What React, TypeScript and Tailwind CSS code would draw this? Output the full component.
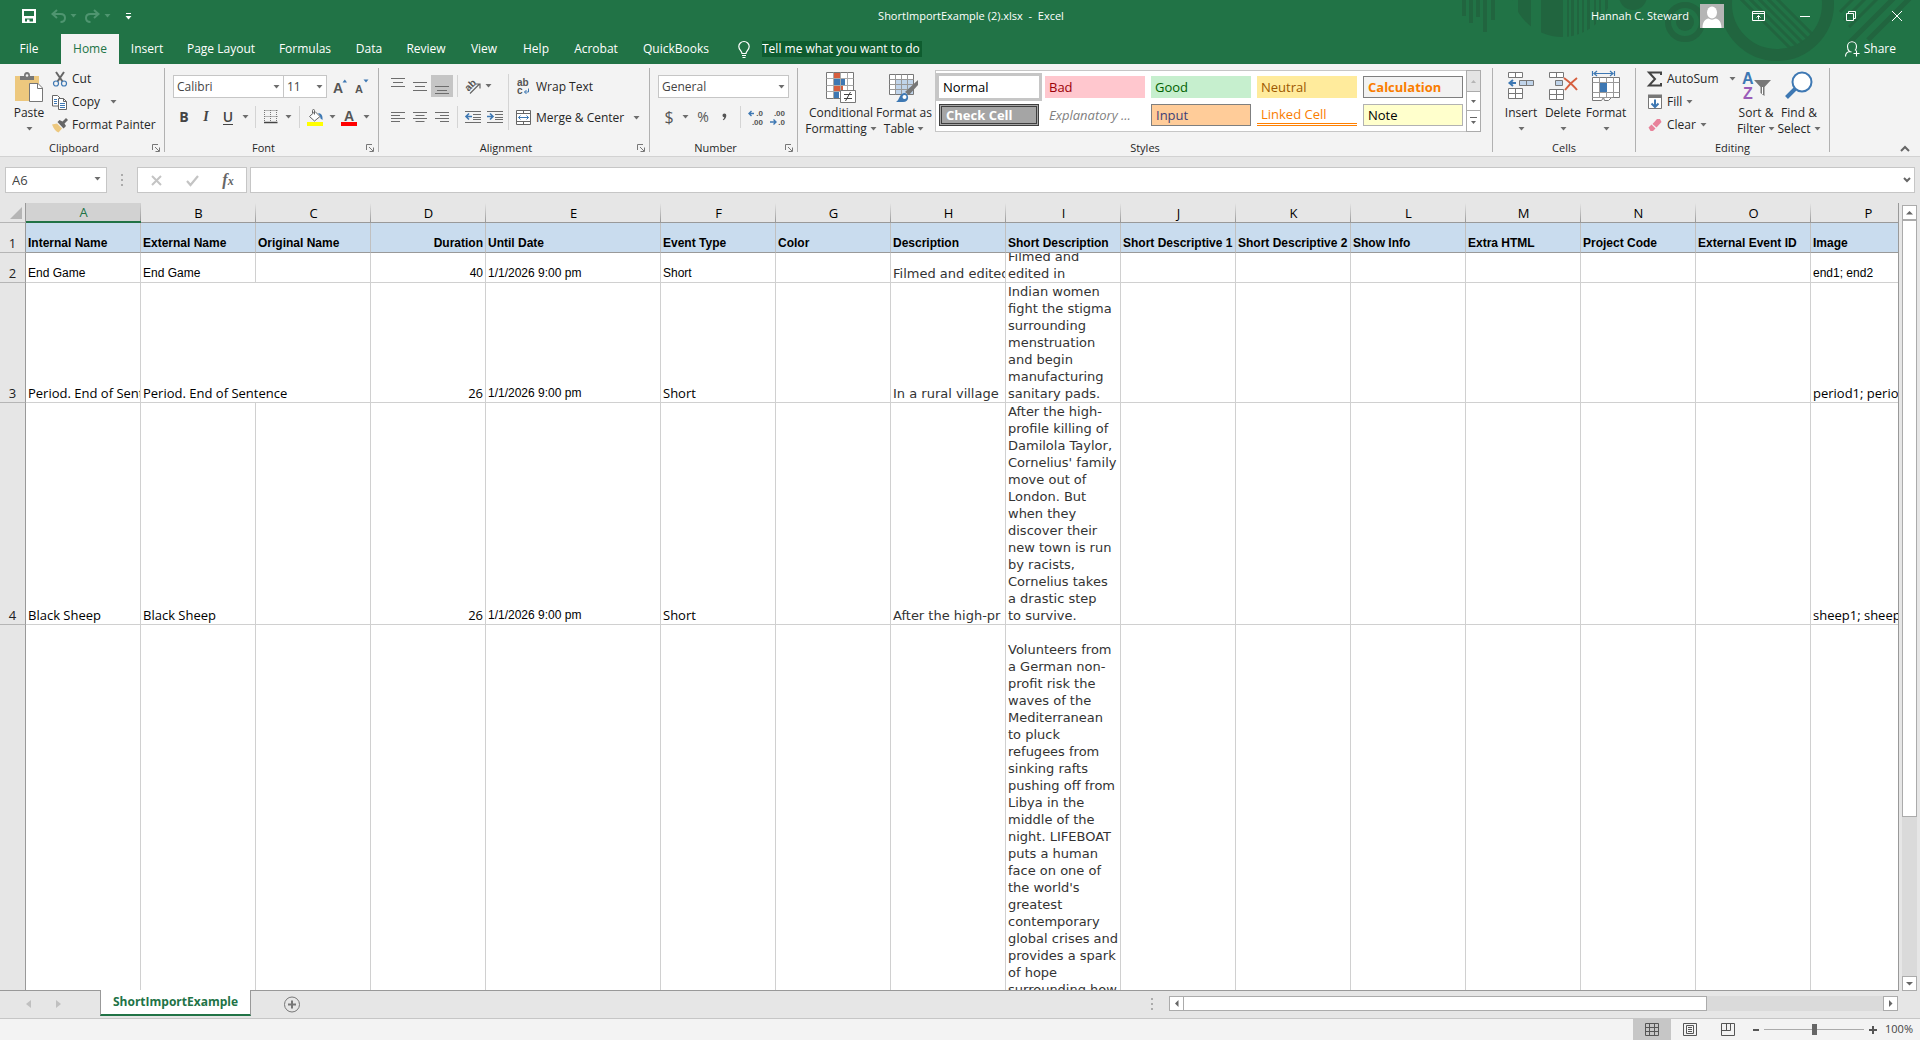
import type { ReactNode } from "react";

const BLUE = "#3e78b3";
const GREY = "#6d6d6d";

/* ---------- small shared pieces ---------- */

function Caret({ className = "text-[#6d6d6d]" }: { className?: string }) {
  return (
    <svg width="7" height="4" viewBox="0 0 7 4" className={`shrink-0 ${className}`} aria-hidden="true">
      <path d="M0.5 0h6L3.5 3.6z" fill="currentColor" />
    </svg>
  );
}

function Icon({ w = 16, h = 16, children }: { w?: number; h?: number; children: ReactNode }) {
  return (
    <svg width={w} height={h} viewBox={`0 0 ${w} ${h}`} fill="none" className="shrink-0 overflow-visible font-['Liberation_Sans',sans-serif]" aria-hidden="true">
      {children}
    </svg>
  );
}

function Group({ label, className, launcher = false, children }: { label: string; className: string; launcher?: boolean; children: ReactNode }) {
  return (
    <section aria-label={label} className={`flex shrink-0 flex-col ${className}`}>
      <div className="flex h-[76px]">{children}</div>
      <div className="flex h-4 items-center">
        <span className={`flex-1 text-center text-[11px] text-[#262626] ${launcher ? "pr-1" : ""}`}>{label}</span>
        {launcher && (
          <button aria-label={`${label} settings`} className="flex w-3 items-center">
            <Icon w={8} h={8}>
              <path d="M0.5 6V0.5H6" stroke="#777" />
              <path d="M3 3l4 4M7.5 3.5v4h-4" stroke="#777" />
            </Icon>
          </button>
        )}
      </div>
    </section>
  );
}

function GroupRule() {
  return <div className="mt-1 h-[84px] w-px shrink-0 bg-[#b1b1b1]" />;
}

function ThinRule({ className = "h-[22px]" }: { className?: string }) {
  return <div className={`w-px shrink-0 bg-[#d4d4d4] ${className}`} />;
}

function Tool({ label, className = "w-[22px]", children }: { label: string; className?: string; children: ReactNode }) {
  return (
    <button aria-label={label} className={`flex h-[22px] shrink-0 items-center justify-center ${className}`}>
      {children}
    </button>
  );
}

function BigTool({ icon, lines, className, inline = false }: { icon: ReactNode; lines: string[]; className: string; inline?: boolean }) {
  return (
    <button className={`flex shrink-0 flex-col items-center pt-2 ${className}`}>
      <span className="flex h-[33px] items-start justify-center">{icon}</span>
      {lines.map((line, i) => (
        <span key={line} className="flex h-4 items-center gap-[3px] text-xs whitespace-nowrap text-[#262626]">
          {line}
          {inline && i === lines.length - 1 && <Caret />}
        </span>
      ))}
      {!inline && (
        <span className="flex h-4 items-center">
          <Caret />
        </span>
      )}
    </button>
  );
}

function Dropdown({ label, value, className }: { label: string; value: string; className: string }) {
  return (
    <div className={`relative h-[23px] ${className}`}>
      <select aria-label={label} className="block h-full w-full appearance-none border border-[#c6c6c6] bg-white pl-[3px] text-xs text-[#444] outline-none">
        <option>{value}</option>
      </select>
      <span className="pointer-events-none absolute top-[10px] right-1">
        <Caret />
      </span>
    </div>
  );
}

/* ---------- title bar ---------- */

function TitlePattern() {
  return (
    <svg width="480" height="64" viewBox="0 0 480 64" className="pointer-events-none absolute top-0 right-0" aria-hidden="true">
      <defs>
        <clipPath id="disc">
          <circle cx="122" cy="-14" r="51" />
        </clipPath>
        <clipPath id="hub">
          <circle cx="337" cy="4" r="46" />
        </clipPath>
      </defs>
      <g fill="#21653f">
        <path d="M22 0h4v16h-4zM29 0h4v23h-4zM36 0h4v17h-4zM43 0h4v32h-4zM51 0h4v20h-4z" />
        <g clipPath="url(#disc)">
          <path d="M70 0h3v40h-3zM78 0h13v40h-13zM101 0h22v40h-22zM127 0h2v40h-2zM131 0h3v40h-3zM137 0h2v40h-2zM142 0h2v40h-2zM147 0h3v40h-3zM154 0h2v40h-2zM159 0h2v40h-2zM165 0h3v40h-3z" />
        </g>
        <circle cx="193" cy="-4" r="14" />
        <circle cx="245" cy="22" r="9" />
      </g>
      <g stroke="#21653f" fill="none">
        <circle cx="245" cy="22" r="17" strokeWidth="6" />
        <circle cx="337" cy="4" r="51" strokeWidth="12" />
        <g clipPath="url(#hub)" strokeWidth="3">
          <path d="M286 -16l64 64M295 -16l64 64M304 -16l64 64M313 -16l64 64M322 -16l64 64" />
        </g>
        <path strokeWidth="3" d="M400 12l24-24M404 20l32-32M409 27l39-39" />
        <path strokeWidth="5" d="M410 42l50-50M428 40l50-50" />
      </g>
    </svg>
  );
}

function TitleBar() {
  return (
    <div className="relative flex h-[34px] items-center justify-between pb-[2px] text-[11px] text-white">
      <div className="flex flex-1 items-center pl-[22px]">
        <button aria-label="Save">
          <Icon w={14} h={14}>
            <path fillRule="evenodd" d="M0 0h14v14H0zM2 2v5h10V2zM3 9.500v3h2v-2h2.500v2H11v-3z" fill="#fff" />
          </Icon>
        </button>
        <button aria-label="Undo" className="ml-[15px] flex items-center gap-1 text-[#4f9570]">
          <Icon w={15} h={14}>
            <path d="M6 1L1.500 5 6 9M2 5h7.500c3 0 4.500 1.800 4.500 4s-1.500 4-4.500 4" stroke="currentColor" strokeWidth="2" />
          </Icon>
          <Caret className="text-[#4f9570]" />
        </button>
        <button aria-label="Redo" className="ml-2 flex items-center gap-1 text-[#4f9570]">
          <Icon w={15} h={14}>
            <path d="M9 1l4.500 4L9 9M13 5H5.500C2.500 5 1 6.800 1 9s1.500 4 4.500 4" stroke="currentColor" strokeWidth="2" />
          </Icon>
          <Caret className="text-[#4f9570]" />
        </button>
        <button aria-label="Customize toolbar" className="ml-[14px]">
          <Icon w={7} h={7}>
            <path d="M1 0.500h5" stroke="#fff" />
            <path d="M0.500 3h6L3.500 6.500z" fill="#fff" />
          </Icon>
        </button>
      </div>
      <h1 className="whitespace-pre">ShortImportExample (2).xlsx  -  Excel</h1>
      <div className="flex flex-1 items-center justify-end">
        <span>Hannah C. Steward</span>
        <svg width="24" height="24" viewBox="0 0 24 24" className="ml-[11px]" role="img" aria-label="Account picture">
          <path d="M0 0h24v24H0z" fill="#b5b5b5" />
          <ellipse cx="12" cy="8.500" rx="5" ry="6" fill="#fff" />
          <path d="M2.500 24c0-6 3-9.500 6-9.500 2 1.500 5 1.500 7 0 3 0 6 3.500 6 9.500z" fill="#fff" />
        </svg>
        <button aria-label="Ribbon display options" className="ml-7">
          <Icon w={13} h={10}>
            <path d="M0.500 0.500h12v9h-12zM0.500 2.500h12M6.500 8.500v-4M4.500 6.500l2-2 2 2" stroke="#fff" />
          </Icon>
        </button>
        <button aria-label="Minimize" className="ml-[35px]">
          <Icon w={10} h={10}>
            <path d="M0 5.500h10" stroke="#fff" />
          </Icon>
        </button>
        <button aria-label="Restore" className="ml-9">
          <Icon w={10} h={10}>
            <path d="M0.500 2.500h7v7h-7zM2.500 2.500v-2h7v7h-2" stroke="#fff" />
          </Icon>
        </button>
        <button aria-label="Close" className="mr-[18px] ml-9">
          <Icon w={10} h={10}>
            <path d="M0 0l10 10M10 0L0 10" stroke="#fff" />
          </Icon>
        </button>
      </div>
    </div>
  );
}

const tabs: [string, string][] = [
  ["Insert", "w-[56px]"],
  ["Page Layout", "w-[92px]"],
  ["Formulas", "w-[76px]"],
  ["Data", "w-[52px]"],
  ["Review", "w-[62px]"],
  ["View", "w-[54px]"],
  ["Help", "w-[50px]"],
  ["Acrobat", "w-[70px]"],
  ["QuickBooks", "w-[90px]"],
];

function TabStrip() {
  return (
    <nav aria-label="Ribbon tabs" className="relative flex h-[30px] items-stretch text-xs whitespace-nowrap text-white">
      <button className="w-[58px]">File</button>
      <button className="ml-[3px] w-[58px] bg-[#f3f3f3] text-[#217346]">Home</button>
      {tabs.map(([name, width]) => (
        <button key={name} className={width}>
          {name}
        </button>
      ))}
      <label className="ml-[17px] flex items-center gap-3">
        <Icon w={12} h={17}>
          <path d="M4 12.500c0-2.500-3.200-3.500-3.200-7a5.200 5 0 0 1 10.400 0c0 3.500-3.200 4.500-3.200 7zM4 14.500h4M4.500 16.500h3" stroke="#fff" strokeWidth="1.200" />
        </Icon>
        <input
          aria-label="Tell me what you want to do"
          placeholder="Tell me what you want to do"
          className="h-4 w-40 bg-[#0e5c2f] text-xs outline-none placeholder:text-white placeholder:opacity-100"
        />
      </label>
      <button className="mr-6 ml-auto flex items-center gap-1">
        <Icon w={15} h={16}>
          <path d="M0.500 15.500c0-3 1.500-4.500 4-5C3 9.500 2.500 8 2.500 5.500a4.500 4.800 0 0 1 9 0c0 1.500-.5 3-1.500 4M4.500 10.500l2 .500M11.500 9.500v6M8.500 12.500h6" stroke="#fff" strokeWidth="1.100" />
        </Icon>
        Share
      </button>
    </nav>
  );
}

/* ---------- ribbon groups ---------- */

function SmallTool({ icon, label, caret = "" }: { icon: ReactNode; label: string; caret?: string }) {
  return (
    <button className="flex h-[23px] items-center text-xs whitespace-nowrap text-[#262626]">
      <span className="flex w-5 shrink-0 justify-start">{icon}</span>
      {label}
      {caret && (
        <span className={caret}>
          <Caret />
        </span>
      )}
    </button>
  );
}

function ClipboardGroup() {
  return (
    <Group label="Clipboard" className="w-[164px]" launcher>
      <BigTool
        className="ml-2 w-[42px]"
        lines={["Paste"]}
        icon={
          <Icon w={28} h={31}>
            <path d="M0 4h24v25H0z" fill="#edc87e" />
            <path d="M5 8V4h4c0-3 1-4 3-4s3 1 3 4h4v4z" fill="#777" />
            <circle cx="12" cy="3.500" r="1.300" fill="#f3f3f3" />
            <path d="M14.500 11.500h8.500l4.500 4.500v13.500h-13z" fill="#fff" stroke="#777" />
            <path d="M22.500 11.500v5h5" stroke="#777" />
          </Icon>
        }
      />
      <div className="ml-[2px] flex flex-col pt-[3px]">
        <SmallTool
          label="Cut"
          icon={
            <Icon w={16} h={16}>
              <path d="M4 1l6.500 9.500M12 1L5.500 10.500" stroke="#666" strokeWidth="2" />
              <circle cx="4" cy="12.500" r="2.500" stroke={BLUE} strokeWidth="1.200" />
              <circle cx="12" cy="12.500" r="2.500" stroke={BLUE} strokeWidth="1.200" />
            </Icon>
          }
        />
        <SmallTool
          label="Copy"
          caret="ml-[10px]"
          icon={
            <Icon w={16} h={16}>
              <path d="M0.500 1.500h5l2.500 2.500v8h-7.500z" fill="#fff" stroke="#666" />
              <path d="M2 5.500h3M2 7.500h3M2 9.500h3" stroke={BLUE} />
              <path d="M6.500 4.500h5l3 3v8h-8z" fill="#fff" stroke="#666" />
              <path d="M11.500 4.500v3h3" stroke="#666" />
              <path d="M8 9.500h5M8 11.500h5M8 13.500h5" stroke={BLUE} />
            </Icon>
          }
        />
        <SmallTool
          label="Format Painter"
          icon={
            <Icon w={16} h={16}>
              <path d="M0 7.500l5-1 5 5-3.500 4c-2.500-1-5-4-6.500-8z" fill="#edc87e" />
              <path d="M5.500 5l2-2 3 1.500L14 1l2 2-3.500 3.500L14 9l-2.500 2.500z" fill="#666" />
            </Icon>
          }
        />
      </div>
    </Group>
  );
}

function FontGroup() {
  const letter = "text-sm leading-none text-[#444]";
  return (
    <Group label="Font" className="w-[213px]" launcher>
      <div className="flex flex-col gap-2 pt-[11px] pl-2">
        <div className="flex items-center">
          <Dropdown label="Font name" value="Calibri" className="w-[111px]" />
          <Dropdown label="Font size" value="11" className="-ml-px w-[44px]" />
          <Tool label="Increase font size" className="ml-[6px] w-[14px]">
            <Icon w={14} h={16}>
              <text x="0" y="14" fontSize="14" fontWeight="700" fill="#555">A</text>
              <path d="M9.500 3.500h4.500L11.800 0.500z" fill={BLUE} />
            </Icon>
          </Tool>
          <Tool label="Decrease font size" className="ml-2 w-[14px]">
            <Icon w={14} h={16}>
              <text x="0" y="14" fontSize="11" fontWeight="700" fill="#555">A</text>
              <path d="M8.500 0.500h5L11 3.500z" fill={BLUE} />
            </Icon>
          </Tool>
        </div>
        <div className="flex items-center">
          <Tool label="Bold">
            <b className={letter}>B</b>
          </Tool>
          <Tool label="Italic">
            <i className={`font-['Liberation_Serif',serif] font-bold ${letter}`}>I</i>
          </Tool>
          <Tool label="Underline">
            <span className={`border-b border-[#444] font-semibold ${letter}`}>U</span>
          </Tool>
          <Tool label="Underline options" className="w-3">
            <Caret />
          </Tool>
          <span className="w-1" />
          <ThinRule />
          <Tool label="Borders" className="ml-2 w-[14px]">
            <Icon w={14} h={14}>
              <path d="M0.500 0.500h13M0.500 6.500h13M0.500 0v13M6.500 0v13M12.500 0v13" stroke="#777" strokeDasharray="1 1" />
              <path d="M0 12.500h13.500" stroke="#444" strokeWidth="1.500" />
            </Icon>
          </Tool>
          <Tool label="Border options" className="ml-[3px] w-[14px]">
            <Caret />
          </Tool>
          <ThinRule className="ml-1 h-[22px]" />
          <Tool label="Fill color" className="ml-[7px] w-4">
            <Icon w={16} h={17}>
              <path d="M2.500 7.500L8 2.500l5 5-5.500 4.500z" fill="#fff" stroke="#666" />
              <path d="M7.500 5.500V1.500a1 1 0 0 0-2 0V4" stroke="#666" />
              <path d="M11 4c3 .5 5 2 4.500 7l-2-1.500L13 7z" fill={BLUE} />
              <path d="M0 13h16v4H0z" fill="#ff0" />
            </Icon>
          </Tool>
          <Tool label="Fill color options" className="w-[18px]">
            <Caret />
          </Tool>
          <Tool label="Font color" className="w-4">
            <Icon w={16} h={17}>
              <text x="8" y="12" fontSize="14" fontWeight="700" textAnchor="middle" fill="#555">A</text>
              <path d="M0 13h16v4H0z" fill="#f00" />
            </Icon>
          </Tool>
          <Tool label="Font color options" className="w-[18px]">
            <Caret />
          </Tool>
        </div>
      </div>
    </Group>
  );
}

function Lines({ d }: { d: string }) {
  return (
    <Icon w={14} h={12}>
      <path d={d} stroke={GREY} />
    </Icon>
  );
}

function AlignmentGroup() {
  return (
    <Group label="Alignment" className="w-[270px]" launcher>
      <div className="flex flex-col gap-[9px] pt-[11px] pl-2">
        <div className="flex items-center">
          <Tool label="Top align">
            <Icon w={14} h={18}>
              <path d="M0 1.500h14M2 5.500h10M0 9.500h14" stroke={GREY} />
            </Icon>
          </Tool>
          <Tool label="Middle align">
            <Icon w={14} h={18}>
              <path d="M0 5.500h14M2 9.500h10M0 13.500h14" stroke={GREY} />
            </Icon>
          </Tool>
          <Tool label="Bottom align" className="w-[22px] bg-[#c5c5c5]">
            <Icon w={14} h={18}>
              <path d="M0 9.500h14M2 13.500h10M0 16.500h14" stroke={GREY} />
            </Icon>
          </Tool>
          <ThinRule className="ml-1 h-[22px]" />
          <Tool label="Orientation" className="ml-[7px] w-4">
            <Icon w={16} h={15}>
              <text x="0" y="10" fontSize="10" fontWeight="700" fill="#555" transform="rotate(-45 5 7)">ab</text>
              <path d="M5 14.500L14.500 5M10.500 5H15v4.500" stroke="#666" strokeWidth="1.200" />
            </Icon>
          </Tool>
          <Tool label="Orientation options" className="w-[14px]">
            <Caret />
          </Tool>
        </div>
        <div className="flex items-center">
          <Tool label="Align left">
            <Lines d="M0 1.500h14M0 4.500h9M0 7.500h14M0 10.500h9" />
          </Tool>
          <Tool label="Center">
            <Lines d="M0 1.500h14M2.500 4.500h9M0 7.500h14M2.500 10.500h9" />
          </Tool>
          <Tool label="Align right">
            <Lines d="M0 1.500h14M5 4.500h9M0 7.500h14M5 10.500h9" />
          </Tool>
          <ThinRule className="ml-1 h-[22px]" />
          <Tool label="Decrease indent" className="ml-[7px] w-4">
            <Icon w={16} h={14}>
              <path d="M0 1.500h16M8 4.500h8M8 7.500h8M8 9.500h8M0 12.500h16" stroke={GREY} />
              <path d="M7 6.500H1M4 3.500l-3 3 3 3" stroke={BLUE} strokeWidth="1.600" />
            </Icon>
          </Tool>
          <Tool label="Increase indent" className="ml-[6px] w-4">
            <Icon w={16} h={14}>
              <path d="M0 1.500h16M8 4.500h8M8 7.500h8M8 9.500h8M0 12.500h16" stroke={GREY} />
              <path d="M0 6.500h6M3 3.500l3 3-3 3" stroke={BLUE} strokeWidth="1.600" />
            </Icon>
          </Tool>
        </div>
      </div>
      <ThinRule className="mt-[10px] ml-[5px] h-14" />
      <div className="flex flex-col gap-2 pt-[11px] pl-[7px]">
        <SmallTool
          label="Wrap Text"
          icon={
            <Icon w={14} h={16}>
              <text x="1" y="7" fontSize="10" fontWeight="700" fill="#555">ab</text>
              <text x="1" y="15" fontSize="10" fontWeight="700" fill="#555">c</text>
              <path d="M12.500 9.500v3.500H8.500M10.500 11l-2 2 2 2" stroke={BLUE} />
            </Icon>
          }
        />
        <SmallTool
          label="Merge & Center"
          caret="ml-[9px]"
          icon={
            <Icon w={16} h={16}>
              <path d="M0.500 0.500h14v14h-14zM0.500 3.500h14M0.500 11.500h14M7.500 0.500v3M7.500 11.500v3" stroke="#666" fill="#fff" />
              <path d="M2.500 7.500h10M4.500 5.500l-2 2 2 2M10.500 5.500l2 2-2 2" stroke={BLUE} />
            </Icon>
          }
        />
      </div>
    </Group>
  );
}

function NumberGroup() {
  const mark = "text-base leading-none text-[#555]";
  return (
    <Group label="Number" className="w-[147px]" launcher>
      <div className="flex flex-col gap-2 pt-[11px] pl-2">
        <Dropdown label="Number format" value="General" className="w-[131px]" />
        <div className="flex items-center">
          <Tool label="Accounting format">
            <span className={mark}>$</span>
          </Tool>
          <Tool label="Accounting options" className="w-[10px]">
            <Caret />
          </Tool>
          <Tool label="Percent" className="ml-[2px] w-[22px]">
            <span className="text-sm leading-none text-[#555]">%</span>
          </Tool>
          <Tool label="Comma style" className="w-5">
            <Icon w={5} h={8}>
              <path d="M0.500 2.300A1.900 1.900 0 0 1 4.300 2.300c0 2.500-1.200 4-3 5l-.5-.8c1-.6 1.300-1.200 1.400-2.200C1.200 4.300 .5 3.300 .5 2.300z" fill="#555" />
            </Icon>
          </Tool>
          <ThinRule className="ml-[6px] h-[22px]" />
          <Tool label="Increase decimal" className="ml-[7px] w-4">
            <Icon w={16} h={15}>
              <path d="M6 3.500H1M3.500 1L1 3.500 3.500 6" stroke={BLUE} strokeWidth="1.400" />
              <text x="15" y="6" fontSize="8" fontWeight="700" textAnchor="end" fill="#555">.0</text>
              <text x="15" y="15" fontSize="8" fontWeight="700" textAnchor="end" fill="#555">.00</text>
            </Icon>
          </Tool>
          <Tool label="Decrease decimal" className="ml-[6px] w-4">
            <Icon w={16} h={15}>
              <path d="M0 12h5.500M3.500 9.500L6 12l-2.500 2.500" stroke={BLUE} strokeWidth="1.400" />
              <text x="15" y="6" fontSize="8" fontWeight="700" textAnchor="end" fill="#555">.00</text>
              <text x="15" y="15" fontSize="8" fontWeight="700" textAnchor="end" fill="#555">.0</text>
            </Icon>
          </Tool>
        </div>
      </div>
    </Group>
  );
}

const cellStyles: [string, string][] = [
  ["Normal", "bg-white text-black outline-3 outline-[#c6c6c6]"],
  ["Bad", "bg-[#ffc7ce] text-[#9c0006]"],
  ["Good", "bg-[#c6efce] text-[#006100]"],
  ["Neutral", "bg-[#ffeb9c] text-[#9c5700]"],
  ["Calculation", "border border-[#7f7f7f] bg-[#f2f2f2] font-bold text-[#fa7d00]"],
  ["Check Cell", "border-3 border-double border-[#3f3f3f] bg-[#a5a5a5] font-bold text-white"],
  ["Explanatory ...", "text-[#7f7f7f] italic"],
  ["Input", "border border-[#7f7f7f] bg-[#ffcc99] text-[#3f3f76]"],
  ["Linked Cell", "border-b-3 border-double border-[#ff8001] text-[#fa7d00]"],
  ["Note", "border border-[#b2b2b2] bg-[#ffffcc] text-black"],
];

function StylesGroup() {
  return (
    <Group label="Styles" className="w-[694px]">
      <BigTool
        className="ml-[10px] w-[66px]"
        lines={["Conditional", "Formatting"]}
        inline
        icon={
          <Icon w={30} h={31}>
            <path d="M0.500 0.500h27v26h-27z" fill="#fff" stroke="#777" />
            <path d="M8 1h6v5H8zM8 13h9v6H8z" fill="#d65f3f" />
            <path d="M8 7h11v6H8zM8 20h5v6H8z" fill={BLUE} />
            <path d="M7.500 0.500v26M14.500 0.500v26M21.500 0.500v26M0.500 6.500h27M0.500 13.500h27M0.500 19.500h27" stroke="#aaa" />
            <path d="M14.500 18.500h15v12h-15z" fill="#fff" stroke="#777" />
            <path d="M18 22.500h8M18 26.500h8M24.500 20l-5 9" stroke="#444" />
          </Icon>
        }
      />
      <BigTool
        className="w-[60px]"
        lines={["Format as", "Table"]}
        inline
        icon={
          <Icon w={30} h={31}>
            <path d="M0.500 2.500h24v20h-24z" fill="#fff" stroke="#777" />
            <path d="M7 8h17v14H7z" fill="#c0d4ea" />
            <path d="M6.500 2.500v20M12.500 2.500v20M18.500 2.500v20M0.500 7.500h24M0.500 12.500h24M0.500 17.500h24" stroke="#999" />
            <path d="M29 8v5l-9 10-4-3z" fill="#777" />
            <path d="M7 30c4-2 3-9 9-9 4 1 5 9-2 9z" fill={BLUE} />
            <circle cx="15.500" cy="25" r="2" fill="#fff" />
          </Icon>
        }
      />
      <div className="mt-[6px] ml-px flex h-[62px] border border-[#c6c6c6] bg-white">
        <div className="grid grid-cols-5 content-start gap-[6px] pt-[5px] pr-[3px] pl-[3px]">
          {cellStyles.map(([name, look]) => (
            <button key={name} className={`flex h-[22px] w-[100px] items-center bg-clip-border px-1 text-[13px] leading-4 whitespace-nowrap ${look}`}>
              {name}
            </button>
          ))}
        </div>
        <div className="-my-px -mr-px flex w-[15px] flex-col border border-[#ababab]">
          <button aria-label="Previous styles" className="flex h-[20px] items-center justify-center bg-[#e4e4e4]">
            <Icon w={5} h={3}>
              <path d="M0 3h5L2.500 0z" fill="#b5b5b5" />
            </Icon>
          </button>
          <button aria-label="Next styles" className="flex h-[20px] items-center justify-center border-y border-[#ababab]">
            <Icon w={5} h={3}>
              <path d="M0 0h5L2.500 3z" fill="#666" />
            </Icon>
          </button>
          <button aria-label="All styles" className="flex flex-1 items-center justify-center">
            <Icon w={7} h={8}>
              <path d="M0 0.500h7" stroke="#666" />
              <path d="M1 4h5L3.500 7z" fill="#666" />
            </Icon>
          </button>
        </div>
      </div>
    </Group>
  );
}

function CellsGroup() {
  return (
    <Group label="Cells" className="w-[142px]">
      <BigTool
        className="ml-[8px] w-10"
        lines={["Insert"]}
        icon={
          <Icon w={28} h={31}>
            <path d="M1.500 0.500h14v5h-14zM8.500 0.500v5M1.500 16.500h14v10h-14zM8.500 16.500v10M1.500 21.500h14" fill="#fff" stroke="#777" />
            <path d="M12.500 8.500h14v5h-14zM19.500 8.500v5" fill="#c0d4ea" stroke="#777" />
            <path d="M9 11H3M6 8l-3.500 3L6 14" stroke={BLUE} strokeWidth="2" />
          </Icon>
        }
      />
      <BigTool
        className="w-[44px]"
        lines={["Delete"]}
        icon={
          <Icon w={30} h={31}>
            <path d="M1.500 0.500h14v5h-14zM8.500 0.500v5M1.500 17.500h14v10h-14zM8.500 17.500v10M1.500 22.500h14" fill="#fff" stroke="#777" />
            <path d="M7.500 8.500h7v5h-7z" fill="#c0d4ea" stroke="#777" />
            <path d="M16 6c4 3 9 7 13 12M29 6c-4 3-9 8-12 12" stroke="#d65f3f" strokeWidth="2" />
          </Icon>
        }
      />
      <BigTool
        className="w-[42px]"
        lines={["Format"]}
        icon={
          <Icon w={30} h={31}>
            <path d="M1.500 -1v5M23.500 -1v5M3 1.500h19M6 -1L3 1.500 6 4M19 -1l3 2.500L19 4" stroke={BLUE} strokeWidth="1.200" />
            <path d="M1.500 5.500h27v20h-8l-3 3h-4l-1-3-2 3h-9z" fill="#fff" stroke="#777" />
            <path d="M8.500 5.500v20M15.500 5.500v20M22.500 5.500v20M1.500 10.500h27M1.500 20.500h27M1.500 25.500h20" stroke="#999" />
            <path d="M9 11h7v9H9z" fill={BLUE} />
          </Icon>
        }
      />
    </Group>
  );
}

function EditingGroup() {
  return (
    <Group label="Editing" className="w-[193px]">
      <div className="flex w-[97px] flex-col pt-[3px] pl-[11px]">
        <SmallTool
          label="AutoSum"
          caret="ml-[10px]"
          icon={
            <Icon w={16} h={16}>
              <path d="M14 4V1.500H2l6 6.500-6 6.500h12V12" stroke="#444" strokeWidth="2" />
            </Icon>
          }
        />
        <SmallTool
          label="Fill"
          caret="ml-1"
          icon={
            <Icon w={16} h={16}>
              <path d="M1.500 1.500h13v13h-13z" fill="#fff" stroke="#777" />
              <path d="M1 0.500h14v3.500H1z" fill="#777" />
              <path d="M8 5.500v7M4.500 9.500L8 13l3.500-3.500" stroke={BLUE} strokeWidth="2" />
            </Icon>
          }
        />
        <SmallTool
          label="Clear"
          caret="ml-1"
          icon={
            <Icon w={16} h={16}>
              <path d="M5.500 7L10 2h3l1.500 3-5 5.500z" fill="#e8829a" />
              <path d="M1.500 10.500l3-3 4 4-2.500 2.500h-2.500z" fill="#e8829a" />
            </Icon>
          }
        />
      </div>
      <BigTool
        className="w-[46px]"
        lines={["Sort &", "Filter"]}
        inline
        icon={
          <Icon w={30} h={31}>
            <text x="1" y="12" fontSize="16" fontWeight="700" fill={BLUE}>A</text>
            <text x="2" y="27" fontSize="16" fontWeight="700" fill="#9a5cb8">Z</text>
            <path d="M13 8h17l-6.500 7v9l-4-3v-6z" fill="#777" />
            <path d="M21.500 15v7" stroke="#fff" />
          </Icon>
        }
      />
      <BigTool
        className="w-10"
        lines={["Find &", "Select"]}
        inline
        icon={
          <Icon w={28} h={31}>
            <circle cx="17" cy="10" r="9.500" fill="#fff" stroke={BLUE} strokeWidth="2" />
            <path d="M10 17L1.500 25.500" stroke={BLUE} strokeWidth="4" />
          </Icon>
        }
      />
    </Group>
  );
}

function Ribbon() {
  return (
    <div className="flex h-[93px] overflow-hidden border-b border-[#d2d2d2] bg-[#f3f3f3]">
      <ClipboardGroup />
      <GroupRule />
      <FontGroup />
      <GroupRule />
      <AlignmentGroup />
      <GroupRule />
      <NumberGroup />
      <GroupRule />
      <StylesGroup />
      <GroupRule />
      <CellsGroup />
      <GroupRule />
      <EditingGroup />
      <GroupRule />
      <button aria-label="Collapse the ribbon" className="mr-[10px] mb-1 ml-auto self-end">
        <Icon w={10} h={7}>
          <path d="M1 6l4-4 4 4" stroke="#666" strokeWidth="2" />
        </Icon>
      </button>
    </div>
  );
}

/* ---------- formula bar ---------- */

function Grip() {
  return (
    <Icon w={2} h={12}>
      <path d="M0 1h2M0 6h2M0 11h2" stroke="#ababab" strokeWidth="2" />
    </Icon>
  );
}

function FormulaBar() {
  return (
    <div className="flex h-[46px] items-start bg-[#e6e6e6] pt-[10px] pr-[5px] pl-[5px]">
      <div className="relative h-[26px] w-[102px]">
        <input aria-label="Name box" defaultValue="A6" className="block h-full w-full border border-[#c6c6c6] bg-white pl-[6px] text-[13px] text-[#444] outline-none" />
        <span className="pointer-events-none absolute top-[10px] right-[6px]">
          <Caret />
        </span>
      </div>
      <span className="flex h-[26px] w-[30px] items-center justify-center">
        <Grip />
      </span>
      <div className="flex h-[26px] w-[110px] items-center border border-[#c6c6c6] bg-white">
        <Tool label="Cancel" className="w-9">
          <Icon w={11} h={11}>
            <path d="M1 1l9 9M10 1l-9 9" stroke="#c4c4c4" strokeWidth="2" />
          </Icon>
        </Tool>
        <Tool label="Enter" className="w-9">
          <Icon w={13} h={11}>
            <path d="M1 6l3.500 4L12 1" stroke="#c4c4c4" strokeWidth="2.200" />
          </Icon>
        </Tool>
        <Tool label="Insert function" className="w-9">
          <i className="font-['Liberation_Serif',serif] text-base leading-none font-bold text-[#666]">
            f<span className="text-xs">x</span>
          </i>
        </Tool>
      </div>
      <div className="relative ml-[3px] h-[26px] flex-1">
        <input aria-label="Formula" className="block h-full w-full border border-[#c6c6c6] bg-white px-1 text-[13px] outline-none" />
        <button aria-label="Expand formula bar" className="absolute top-[10px] right-1">
          <Icon w={8} h={6}>
            <path d="M1 1l3 3 3-3" stroke="#666" strokeWidth="2" />
          </Icon>
        </button>
      </div>
    </div>
  );
}

/* ---------- sheet ---------- */

const columns = "ABCDEFGHIJKLMNOP".split("");

const headings = [
  "Internal Name",
  "External Name",
  "Original Name",
  "Duration",
  "Until Date",
  "Event Type",
  "Color",
  "Description",
  "Short Description",
  "Short Descriptive 1",
  "Short Descriptive 2",
  "Show Info",
  "Extra HTML",
  "Project Code",
  "External Event ID",
  "Image",
];

type Row = {
  id: number;
  height: string;
  inner: string;
  plain: string;
  title: string;
  titleSpan: number;
  minutes: string;
  until: string;
  type: string;
  description: string;
  summary: string;
  image: string;
};

const arial = "font-['Liberation_Sans',sans-serif] text-xs";
const segoe = "text-[13px]";
const verdana = "font-['DejaVu_Sans',sans-serif] text-[13px] text-[#333]";

const rows: Row[] = [
  {
    id: 2,
    height: "h-[30px]",
    inner: "h-[29px]",
    plain: arial,
    title: "End Game",
    titleSpan: 1,
    minutes: "40",
    until: "1/1/2026 9:00 pm",
    type: "Short",
    description: "Filmed and edited in",
    summary: "Filmed and\nedited in",
    image: "end1; end2",
  },
  {
    id: 3,
    height: "h-[120px]",
    inner: "h-[119px]",
    plain: segoe,
    title: "Period. End of Sentence",
    titleSpan: 2,
    minutes: "26",
    until: "1/1/2026 9:00 pm",
    type: "Short",
    description: "In a rural village",
    summary: "Indian women\nfight the stigma\nsurrounding\nmenstruation\nand begin\nmanufacturing\nsanitary pads.",
    image: "period1; period2",
  },
  {
    id: 4,
    height: "h-[222px]",
    inner: "h-[221px]",
    plain: segoe,
    title: "Black Sheep",
    titleSpan: 1,
    minutes: "26",
    until: "1/1/2026 9:00 pm",
    type: "Short",
    description: "After the high-pr",
    summary:
      "After the high-\nprofile killing of\nDamilola Taylor,\nCornelius' family\nmove out of\nLondon. But\nwhen they\ndiscover their\nnew town is run\nby racists,\nCornelius takes\na drastic step\nto survive.",
    image: "sheep1; sheep2",
  },
];

const lifeboat =
  "Volunteers from\na German non-\nprofit risk the\nwaves of the\nMediterranean\nto pluck\nrefugees from\nsinking rafts\npushing off from\nLibya in the\nmiddle of the\nnight. LIFEBOAT\nputs a human\nface on one of\nthe world's\ngreatest\ncontemporary\nglobal crises and\nprovides a spark\nof hope\nsurrounding how";

function Cell({ row, text = "", span = 1, look = "", right = false }: { row: Row; text?: string; span?: number; look?: string; right?: boolean }) {
  return (
    <td colSpan={span} className="border-r border-b border-[#d0d0d0] p-0">
      <div className={`flex items-end overflow-hidden px-[2px] leading-[17px] whitespace-pre ${row.inner} ${right ? "justify-end" : ""} ${look}`}>
        <span>{text}</span>
      </div>
    </td>
  );
}

function RowHead({ n }: { n: number }) {
  return (
    <th scope="row" className="border-r border-b border-r-[#999] border-b-[#b5b5b5] bg-[#e6e6e6] p-0 text-center align-bottom text-[13px] leading-[17px] font-normal text-[#222]">
      {n}
    </th>
  );
}

function Sheet() {
  return (
    <div className="min-w-0 flex-1 overflow-hidden border-r border-b border-[#999] bg-white">
      <table className="w-[1926px] table-fixed border-separate border-spacing-0 text-black">
        <colgroup>
          <col className="w-[26px]" />
          {columns.map((c) => (
            <col key={c} className={c === "E" ? "w-[175px]" : "w-[115px]"} />
          ))}
        </colgroup>
        <thead>
          <tr className="h-5">
            <td className="border-r border-b border-r-[#999] border-b-[#b5b5b5] bg-[#e6e6e6] p-0">
              <svg width="25" height="16" viewBox="0 0 25 16" aria-hidden="true">
                <path d="M22 2v12H10z" fill="#b5b5b5" />
              </svg>
            </td>
            {columns.map((c) => (
              <th
                key={c}
                scope="col"
                className={`bg-[linear-gradient(to_bottom,transparent,#999)] bg-[length:1px_100%] bg-right bg-no-repeat p-0 text-[13px] leading-[18px] font-normal ${
                  c === "A" ? "border-b-2 border-[#217346] bg-[#d2d2d2] text-[#217346]" : "border-b border-[#999] bg-[#e6e6e6]"
                }`}
              >
                {c}
              </th>
            ))}
          </tr>
        </thead>
        <tbody>
          <tr className="h-[30px]">
            <RowHead n={1} />
            {headings.map((h) => (
              <td
                key={h}
                className={`border-r border-b border-r-[#c0c0c0] border-b-[#999] bg-[#c9dcee] px-[2px] py-0 align-bottom font-['Liberation_Sans',sans-serif] text-xs leading-[17px] font-bold whitespace-nowrap ${
                  h === "Duration" ? "text-right" : ""
                }`}
              >
                {h}
              </td>
            ))}
          </tr>
          {rows.map((row) => (
            <tr key={row.id} className={row.height}>
              <RowHead n={row.id} />
              <Cell row={row} text={row.title} look={row.plain} />
              <Cell row={row} text={row.title} look={row.plain} span={row.titleSpan} />
              {row.titleSpan === 1 && <Cell row={row} />}
              <Cell row={row} text={row.minutes} look={row.plain} right />
              <Cell row={row} text={row.until} look={arial} />
              <Cell row={row} text={row.type} look={row.plain} />
              <Cell row={row} />
              <Cell row={row} text={row.description} look={verdana} />
              <Cell row={row} text={row.summary} look={verdana} />
              {columns.slice(9, 15).map((c) => (
                <Cell key={c} row={row} />
              ))}
              <Cell row={row} text={row.image} look={row.plain} />
            </tr>
          ))}
          <tr className="h-[480px]">
            <td className="border-r border-[#999] bg-[#e6e6e6] p-0" />
            {columns.map((c) => (
              <td key={c} className={`border-r border-[#d0d0d0] px-[2px] pt-4 pb-0 align-top leading-[17px] whitespace-pre ${verdana}`}>
                {c === "I" ? lifeboat : ""}
              </td>
            ))}
          </tr>
        </tbody>
      </table>
    </div>
  );
}

function ArrowButton({ label, d }: { label: string; d: string }) {
  return (
    <button aria-label={label} className="flex size-[15px] shrink-0 items-center justify-center border border-[#ababab] bg-white">
      <Icon w={7} h={7}>
        <path d={d} fill="#666" />
      </Icon>
    </button>
  );
}

function VerticalScroll() {
  return (
    <div className="flex w-[21px] flex-col bg-[#e6e6e6] pt-[2px] pr-[3px] pl-[3px]">
      <ArrowButton label="Scroll up" d="M0 5.500h7L3.500 2z" />
      <div className="flex min-h-0 flex-1 flex-col bg-[#dadada]">
        <div className="h-[79%] w-[15px] border border-[#ababab] bg-white" />
      </div>
      <ArrowButton label="Scroll down" d="M0 2h7L3.500 5.500z" />
    </div>
  );
}

/* ---------- bottom bars ---------- */

function SheetTabs() {
  return (
    <div className="flex h-7 items-start border-b border-[#c6c6c6] bg-[#e6e6e6]">
      <div className="flex h-[26px] w-[100px] items-center pl-[26px]">
        <button aria-label="Previous sheet">
          <Icon w={5} h={8}>
            <path d="M5 0v8L0 4z" fill="#c0c0c0" />
          </Icon>
        </button>
        <button aria-label="Next sheet" className="ml-[25px]">
          <Icon w={5} h={8}>
            <path d="M0 0v8l5-4z" fill="#c0c0c0" />
          </Icon>
        </button>
      </div>
      <button className="relative -mt-px h-[26px] w-[151px] border-x border-b-2 border-x-[#999] border-b-[#217346] bg-white text-xs font-bold text-[#217346]">ShortImportExample</button>
      <button aria-label="New sheet" className="mt-[5px] ml-8">
        <Icon w={18} h={17}>
          <circle cx="9" cy="8.500" r="7.500" stroke="#777" />
          <path d="M9 4.500v8M5 8.500h8" stroke="#777" strokeWidth="2" />
        </Icon>
      </button>
      <div className="mt-[5px] mr-[22px] ml-auto flex items-center">
        <Grip />
        <span className="w-4" />
        <ArrowButton label="Scroll left" d="M5.500 0v7L2 3.500z" />
        <div className="flex h-[15px] w-[699px] bg-[#dadada]">
          <div className="-ml-px h-[15px] w-3/4 border border-[#ababab] bg-white" />
        </div>
        <ArrowButton label="Scroll right" d="M2 0v7l3.500-3.500z" />
      </div>
    </div>
  );
}

function StatusBar() {
  return (
    <div className="flex h-[21px] items-center justify-end bg-[#f3f3f3] pr-[7px] text-xs text-[#444]">
      <button aria-label="Normal view" className="flex h-full w-[38px] items-center justify-center bg-[#c6c6c6]">
        <Icon w={14} h={13}>
          <path d="M0.500 0.500h13v12h-13zM4.500 0.500v12M9.500 0.500v12M0.500 4.500h13M0.500 8.500h13" stroke="#555" />
        </Icon>
      </button>
      <button aria-label="Page layout view" className="flex h-full w-[38px] items-center justify-center">
        <Icon w={14} h={13}>
          <path d="M0.500 0.500h13v12h-13zM3.500 2.500h7v8h-7zM5 4.500h4M5 6.500h4M5 8.500h4" stroke="#555" />
        </Icon>
      </button>
      <button aria-label="Page break preview" className="flex h-full w-[38px] items-center justify-center">
        <Icon w={14} h={13}>
          <path d="M0.500 0.500h13v12h-13zM5.500 0.500v7M0.500 7.500h9M9.500 0.500v7" stroke="#555" />
        </Icon>
      </button>
      <button aria-label="Zoom out" className="ml-[6px]">
        <Icon w={6} h={8}>
          <path d="M0 4h6" stroke="#555" strokeWidth="2" />
        </Icon>
      </button>
      <input
        type="range"
        aria-label="Zoom"
        className="mx-[5px] h-[11px] w-[100px] appearance-none bg-[linear-gradient(#ababab,#ababab)] bg-[length:100%_1px] bg-center bg-no-repeat [&::-webkit-slider-thumb]:h-[11px] [&::-webkit-slider-thumb]:w-[5px] [&::-webkit-slider-thumb]:appearance-none [&::-webkit-slider-thumb]:bg-[#666]"
      />
      <button aria-label="Zoom in" className="mr-[6px]">
        <Icon w={8} h={8}>
          <path d="M0 4h8M4 0v8" stroke="#555" strokeWidth="2" />
        </Icon>
      </button>
      <span className="w-[30px] text-right text-[11px]">100%</span>
    </div>
  );
}

export default function App() {
  return (
    <div className="flex h-screen flex-col overflow-hidden bg-[#e6e6e6] font-['Open_Sans','Noto_Sans',sans-serif]">
      <header className="relative bg-[#217346]">
        <TitlePattern />
        <TitleBar />
        <TabStrip />
      </header>
      <Ribbon />
      <FormulaBar />
      <main className="flex min-h-0 flex-1">
        <Sheet />
        <VerticalScroll />
      </main>
      <SheetTabs />
      <StatusBar />
    </div>
  );
}
